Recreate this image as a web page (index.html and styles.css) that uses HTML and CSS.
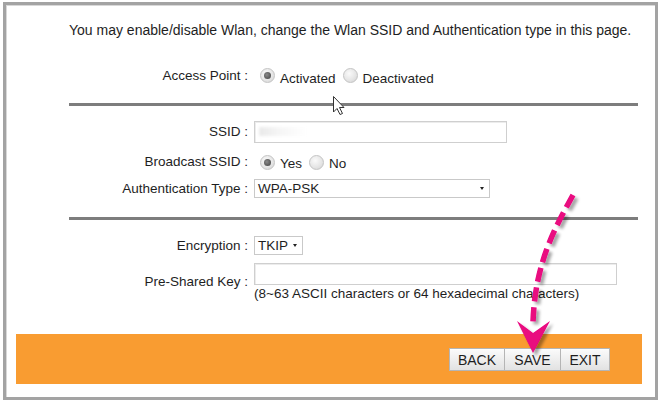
FILE: index.html
```html
<!DOCTYPE html>
<html lang="en">
<head>
  <meta charset="UTF-8">
  <title>Wlan settings</title>
  <link rel="stylesheet" href="styles.css">
</head>
<body>

  <div class="frame">
    <p class="intro">You may enable/disable Wlan, change the Wlan SSID and Authentication type in this page.</p>

    <div class="row row-ap">
      <label>Access Point :</label>
      <div class="field">
        <span class="radio checked"></span><span class="opt">Activated</span>
        <span class="radio"></span><span class="opt">Deactivated</span>
      </div>
    </div>

    <div class="rule rule-1"></div>

    <div class="row row-ssid">
      <label>SSID :</label>
      <div class="field"><span class="input input-ssid"><i class="blur">&nbsp;</i></span></div>
    </div>

    <div class="row row-bc">
      <label>Broadcast SSID :</label>
      <div class="field">
        <span class="radio checked"></span><span class="opt">Yes</span>
        <span class="radio"></span><span class="opt">No</span>
      </div>
    </div>

    <div class="row row-auth">
      <label>Authentication Type :</label>
      <div class="field"><span class="select select-auth">WPA-PSK<b class="caret"></b></span></div>
    </div>

    <div class="rule rule-2"></div>

    <div class="row row-enc">
      <label>Encryption :</label>
      <div class="field"><span class="select select-enc">TKIP<b class="caret"></b></span></div>
    </div>

    <div class="row row-psk">
      <label>Pre-Shared Key :</label>
      <div class="field field-stack">
        <span class="input input-psk"></span>
        <span class="note">(8~63 ASCII characters or 64 hexadecimal characters)</span>
      </div>
    </div>

    <div class="actions">
      <button>BACK</button><button>SAVE</button><button>EXIT</button>
    </div>
  </div>

  <!-- annotation drawn over the screenshot -->
  <svg class="overlay" width="661" height="402" viewBox="0 0 661 402">
    <defs>
      <filter id="shadow" x="-20%" y="-20%" width="140%" height="140%">
        <feDropShadow dx="3" dy="3" stdDeviation="1.5" flood-color="#000" flood-opacity="0.35"/>
      </filter>
    </defs>
    <g filter="url(#shadow)">
      <path d="M573 195 C 556 226 535 262 533 322" fill="none" stroke="#e9077f" stroke-width="5.5" stroke-dasharray="14 6"/>
      <polygon points="517,321 533,333 550,321 533,353" fill="#e9077f"/>
    </g>
    <path class="cursor" d="M333.5 96.5 L333.5 112 L337 108.5 L340 114.5 L342.5 113.5 L339.5 107.5 L344 107.5 Z" fill="#fff" stroke="#333" stroke-width="1"/>
  </svg>

</body>
</html>
```
FILE: styles.css
```css
body {
  margin: 0;
  font-family: "Liberation Sans", Arial, sans-serif;
  font-size: 13.5px;
  color: #1e1e1e;
  background: #fff;
  position: relative;
  width: 661px;
  height: 402px;
  overflow: hidden;
}

.frame {
  box-sizing: border-box;
  margin: 2px 3px 0 3px;
  width: 655px;
  height: 398px;
  border: 3px solid #a3a3a3;
  box-shadow: inset 1px 1px 0 #d8d8d8;
  padding: 0 17px 0 63px;
  display: flex;
  flex-direction: column;
}

.intro {
  margin: 17px 0 0 0;
  font-size: 14px;
  line-height: 16px;
  white-space: nowrap;
}

.row {
  display: grid;
  grid-template-columns: 179px 1fr;
  column-gap: 6px;
  align-items: center;
}

.row label {
  text-align: right;
  white-space: nowrap;
  line-height: 16px;
}

.field {
  display: flex;
  align-items: center;
}

.field-stack {
  flex-direction: column;
  align-items: flex-start;
}

.row-ap { margin-top: 27px; height: 20px; }
.row-ssid { margin-top: 15px; height: 22px; }
.row-bc { margin-top: 9px; height: 20px; }
.row-auth { margin-top: 7px; height: 19px; }
.row-enc { margin-top: 16px; height: 19px; }
.row-psk { margin-top: 8px; }

.row-ap label { margin-top: 1px; }

.rule {
  height: 3px;
  background: #7d7d7d;
}

.rule-1 { margin-top: 18px; }
.rule-2 { margin-top: 19px; }

.radio {
  box-sizing: border-box;
  width: 15px;
  height: 15px;
  border-radius: 50%;
  border: 1px solid #c4c4c4;
  background: radial-gradient(circle at 40% 35%, #fafafa 0%, #e4e4e4 60%, #cfcfcf 100%);
  margin-left: 6px;
  position: relative;
  flex: none;
}

.radio + .opt + .radio {
  margin-left: 7px;
}

.radio.checked::after {
  content: "";
  position: absolute;
  left: 3px;
  top: 3px;
  width: 7px;
  height: 7px;
  border-radius: 50%;
  background: radial-gradient(circle at 40% 40%, #8a8a8a, #3f3f3f);
}

.opt {
  margin-left: 5px;
  position: relative;
  top: 4px;
  line-height: 16px;
}

.row-bc .opt { top: 2px; }

.input {
  box-sizing: border-box;
  display: block;
  height: 22px;
  border: 1px solid #cfcfcf;
  box-shadow: inset 1px 1px 0 #ececec;
  background: #fff;
}

.input-ssid { width: 253px; }
.input-psk { width: 363px; }

.blur {
  display: block;
  margin: 5px 0 0 4px;
  width: 48px;
  height: 9px;
  background: linear-gradient(90deg, #e9e9e9, #f5f5f5 40%, #fff);
  filter: blur(1.5px);
}

.note {
  line-height: 15px;
  margin-top: 1px;
  white-space: nowrap;
}

.select {
  box-sizing: border-box;
  display: flex;
  align-items: center;
  height: 19px;
  padding-left: 3px;
  border: 1px solid #c9c9c9;
  background: #fff;
  position: relative;
}

.select-auth { width: 236px; }
.select-enc { width: 49px; }

.caret {
  position: absolute;
  right: 5px;
  top: 7px;
  width: 0;
  height: 0;
  border-left: 2px solid transparent;
  border-right: 2px solid transparent;
  border-top: 3px solid #222;
}

.actions {
  margin: 33px -4px 0 -53px;
  height: 50px;
  background: #f99c31;
  display: flex;
  justify-content: flex-end;
  align-items: flex-start;
  padding: 14px 32px 0 0;
  box-sizing: border-box;
}

.actions button {
  font-family: "Liberation Sans", Arial, sans-serif;
  font-size: 14px;
  color: #1e1e1e;
  height: 23px;
  width: 56px;
  margin: 0;
  padding: 0;
  border: 1px solid #b5b5b5;
  border-radius: 0;
  background: linear-gradient(#fbfbfb, #e2e2e2);
  box-shadow: inset 0 1px 0 #fff;
}

.actions button + button {
  border-left: none;
}

.actions button:last-child {
  width: 49px;
}

.overlay {
  position: absolute;
  left: 0;
  top: 0;
  pointer-events: none;
}
```
